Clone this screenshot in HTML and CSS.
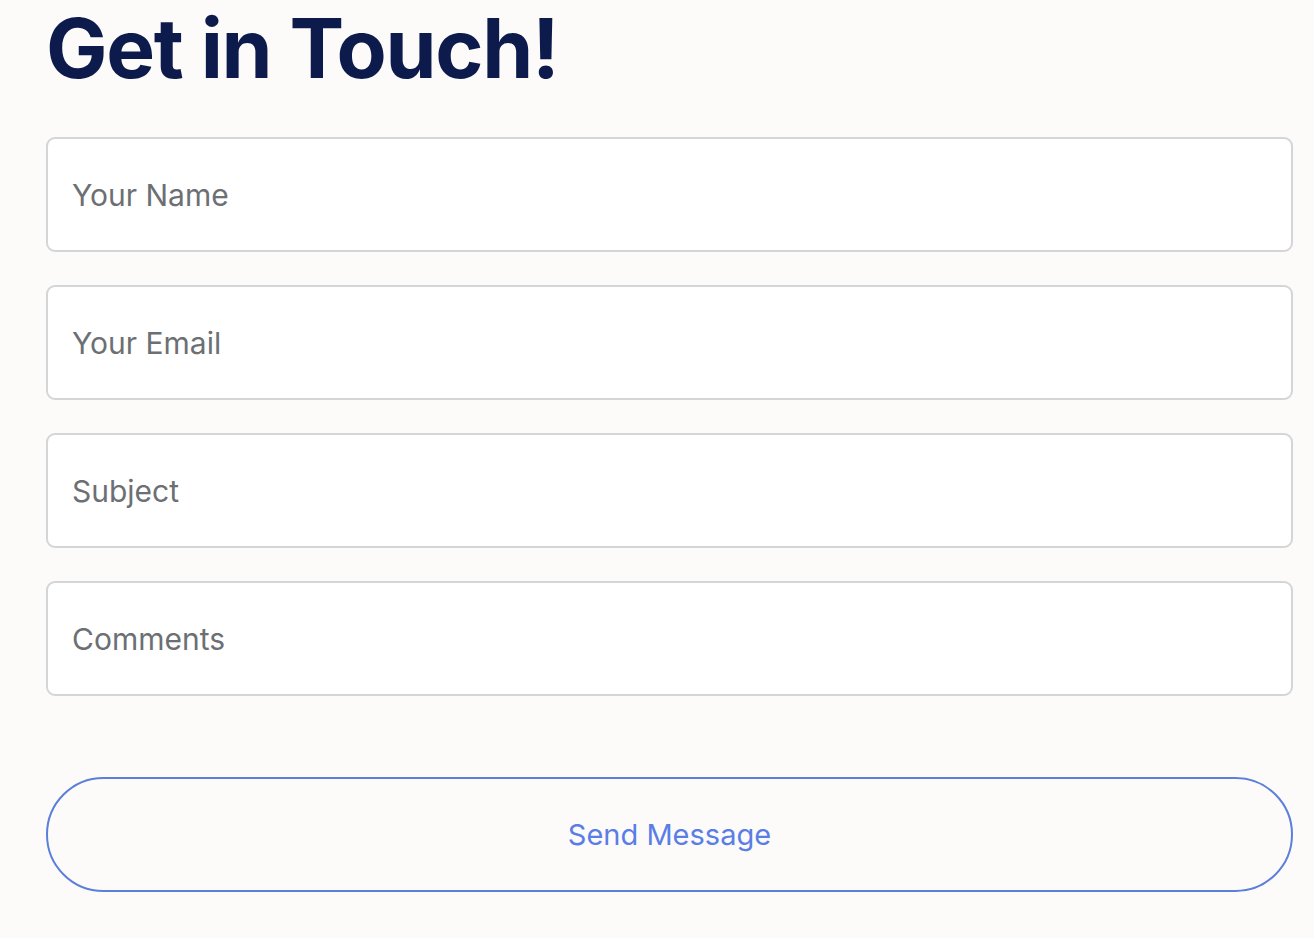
FILE: index.html
```html
<!DOCTYPE html>
<html lang="en">
<head>
    <meta charset="UTF-8">
    <meta name="viewport" content="width=device-width, initial-scale=1.0">
    <title>Get in Touch</title>
    <link rel="stylesheet" href="styles.css">
</head>
<body>
    <div class="contact">
        <h1 class="contact-title">Get in Touch!</h1>
        <form class="contact-form">
            <input type="text" class="field" placeholder="Your Name">
            <input type="email" class="field" placeholder="Your Email">
            <input type="text" class="field" placeholder="Subject">
            <input type="text" class="field" placeholder="Comments">
            <button type="button" class="send-button">Send Message</button>
        </form>
    </div>
</body>
</html>
```

FILE: styles.css
```css
body {
    margin: 0;
    background-color: #fcfbfa;
    font-family: Inter, "Open Sans", sans-serif;
}
.contact {
    padding: 0 21px 0 46px;
}
.contact-title {
    margin: 0;
    padding-top: 8px;
    font-size: 82px;
    line-height: 1;
    font-weight: 700;
    color: #0c1b4b;
    letter-spacing: -1.3px;
}
.contact-form {
    display: flex;
    flex-direction: column;
    gap: 33px;
    margin-top: 47px;
}
.field {
    box-sizing: border-box;
    height: 115px;
    padding: 0 24px;
    border: 2px solid #d4d5d7;
    border-radius: 9px;
    background: #fff;
    font-family: Inter, sans-serif;
    font-size: 30px;
    color: #333;
    outline: none;
}
.field::placeholder {
    color: #6c6f73;
}
.send-button {
    box-sizing: border-box;
    height: 115px;
    margin-top: 48px;
    border: 2px solid #5b7fdb;
    border-radius: 60px;
    background: transparent;
    font-family: Inter, sans-serif;
    font-size: 29px;
    color: #5a7ee6;
    cursor: pointer;
}
```
